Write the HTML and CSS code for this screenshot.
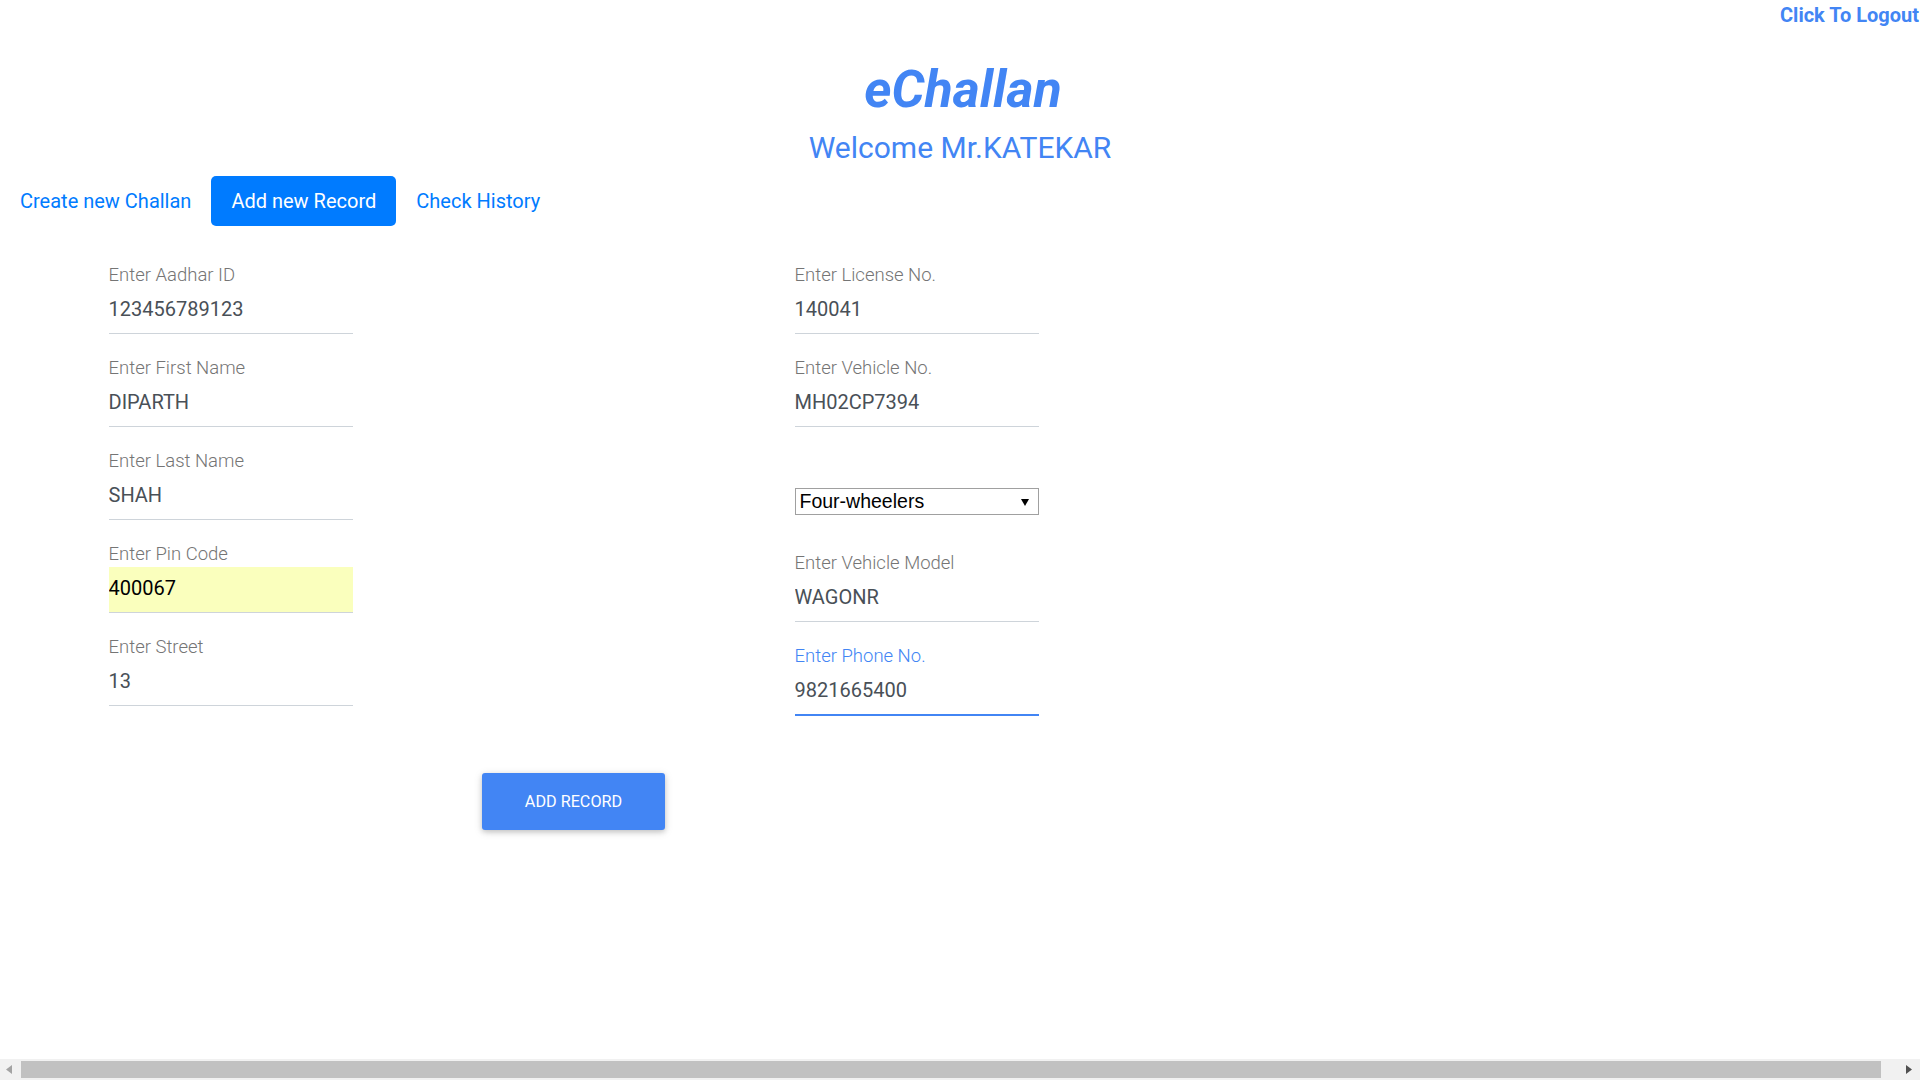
FILE: index.html
```html
<!DOCTYPE html>
<html lang="en">
<head>
<meta charset="utf-8">
<title>eChallan</title>
<link rel="stylesheet" href="styles.css">
</head>
<body>
<div class="topbar"><a class="logout" href="#">Click To Logout</a></div>
<header class="hero">
  <h1 class="brand">eChallan</h1>
  <h2 class="welcome">Welcome Mr.KATEKAR</h2>
</header>
<nav class="tabs">
  <a class="tab" href="#">Create new Challan</a>
  <a class="tab active" href="#">Add new Record</a>
  <a class="tab" href="#">Check History</a>
</nav>
<form class="record-form">
  <div class="col">
    <div class="field"><label class="lbl">Enter Aadhar ID</label><input class="inp" type="text" value="123456789123"></div>
    <div class="field"><label class="lbl">Enter First Name</label><input class="inp" type="text" value="DIPARTH"></div>
    <div class="field"><label class="lbl">Enter Last Name</label><input class="inp" type="text" value="SHAH"></div>
    <div class="field"><label class="lbl">Enter Pin Code</label><input class="inp autofill" type="text" value="400067"></div>
    <div class="field"><label class="lbl">Enter Street</label><input class="inp" type="text" value="13"></div>
  </div>
  <div class="col">
    <div class="field"><label class="lbl">Enter License No.</label><input class="inp" type="text" value="140041"></div>
    <div class="field"><label class="lbl">Enter Vehicle No.</label><input class="inp" type="text" value="MH02CP7394"></div>
    <div class="select-wrap"><select class="sel"><option>Four-wheelers</option></select></div>
    <div class="field"><label class="lbl">Enter Vehicle Model</label><input class="inp" type="text" value="WAGONR"></div>
    <div class="field focused"><label class="lbl">Enter Phone No.</label><input class="inp" type="text" value="9821665400"></div>
  </div>
  <div class="actions"><button class="btn-add" type="button">ADD RECORD</button></div>
</form>
<div class="hscroll">
  <span class="sb-btn"><svg width="6" height="9" viewBox="0 0 6 9"><path d="M6 0 L0 4.5 L6 9 Z" fill="#a3a3a3"/></svg></span>
  <span class="sb-thumb"></span>
  <span class="sb-btn sb-right"><svg width="6" height="9" viewBox="0 0 6 9"><path d="M0 0 L6 4.5 L0 9 Z" fill="#505050"/></svg></span>
</div>
</body>
</html>
```
FILE: styles.css
```css
html, body {
  margin: 0;
  padding: 0;
  background: #fff;
  overflow: hidden;
}
body {
  font-family: Roboto, "Liberation Sans", Arial, sans-serif;
  width: 1920px;
  height: 1080px;
  position: relative;
}
.topbar {
  height: 32px;
  line-height: 30px;
  text-align: right;
}
.logout {
  font-size: 20px;
  font-weight: 700;
  color: #4285f4;
  text-decoration: none;
  padding-right: 1px;
}
.hero {
  text-align: center;
  margin-top: 28px;
}
.brand {
  margin: 0;
  padding-left: 6px;
  font-size: 52px;
  line-height: 60px;
  font-weight: 700;
  font-style: italic;
  color: #4285f4;
}
.welcome {
  margin: 9.5px 0 0;
  font-size: 30px;
  line-height: 36px;
  font-weight: 400;
  color: #4285f4;
}
.tabs {
  display: flex;
  margin-top: 10px;
}
.tab {
  display: block;
  padding: 10px 20px;
  font-size: 20px;
  line-height: 30px;
  color: #007bff;
  text-decoration: none;
  border-radius: 5px;
}
.tab.active {
  background: #007bff;
  color: #fff;
}
.record-form {
  display: grid;
  grid-template-columns: 686px 244px;
  padding-left: 108.5px;
  margin-top: 40px;
}
.col {
  display: flex;
  flex-direction: column;
}
.field {
  width: 244px;
  margin-bottom: 24.5px;
}
.lbl {
  display: block;
  font-size: 18.5px;
  line-height: 19px;
  font-weight: 300;
  color: #757575;
  margin-bottom: 3.5px;
}
.inp {
  display: block;
  box-sizing: border-box;
  width: 244px;
  height: 46px;
  margin: 0;
  padding: 0 0 4px;
  border: 0;
  border-bottom: 1px solid #ced4da;
  outline: none;
  background: transparent;
  font-family: Roboto, "Liberation Sans", Arial, sans-serif;
  font-size: 20px;
  color: #495057;
}
.inp.autofill {
  background: #faffbd;
  color: #000;
}
.focused .lbl {
  color: #4285f4;
}
.focused .inp {
  border-bottom-color: #4285f4;
  box-shadow: 0 1px 0 0 #4285f4;
}
.select-wrap {
  position: relative;
  width: 244px;
  margin-top: 36px;
  margin-bottom: 39px;
}
.select-wrap::after {
  content: "";
  position: absolute;
  right: 10px;
  top: 11px;
  border-left: 4px solid transparent;
  border-right: 4px solid transparent;
  border-top: 7px solid #000;
}
.sel {
  display: block;
  box-sizing: border-box;
  width: 244px;
  height: 27px;
  margin: 0;
  padding: 0 4px;
  border: 1px solid #a0a0a0;
  border-radius: 0;
  background: #fff;
  -webkit-appearance: none;
  appearance: none;
  font-family: "Liberation Sans", Arial, sans-serif;
  font-size: 19.5px;
  color: #000;
}
.actions {
  grid-column: 1 / -1;
  justify-self: center;
  margin-top: 33px;
}
.btn-add {
  height: 57px;
  padding: 0 43px;
  border: 0;
  border-radius: 3px;
  background: #4285f4;
  color: #fff;
  font-family: Roboto, "Liberation Sans", Arial, sans-serif;
  font-size: 16.2px;
  font-weight: 400;
  letter-spacing: 0;
  box-shadow: 0 2px 5px 0 rgba(0,0,0,.16), 0 2px 10px 0 rgba(0,0,0,.12);
  cursor: pointer;
}
.hscroll {
  position: fixed;
  left: 0;
  right: 0;
  bottom: 0;
  height: 21px;
  background: #f1f1f1;
  display: flex;
  align-items: center;
}
.sb-btn {
  width: 17px;
  height: 17px;
  display: flex;
  align-items: center;
  justify-content: center;
}
.sb-thumb {
  margin-left: 4px;
  width: 1860px;
  height: 17px;
  background: #c1c1c1;
}
.sb-right {
  margin-left: auto;
  margin-right: 3px;
}
```
